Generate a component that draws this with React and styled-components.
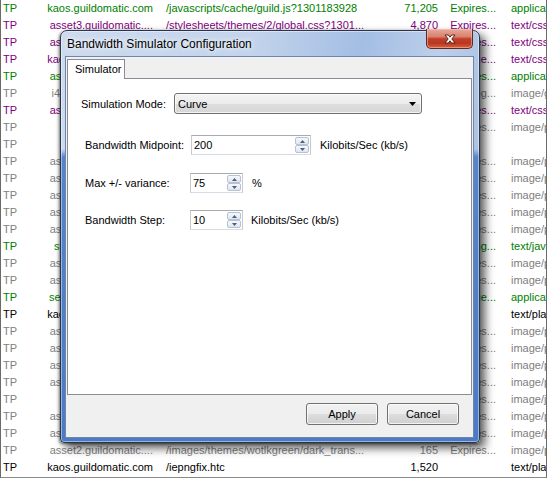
import React from 'react';
import styled, { createGlobalStyle } from 'styled-components';

const GlobalStyle = createGlobalStyle`
    html, body {
        margin: 0;
        padding: 0;
        background: #fff;
        font-family: "Liberation Sans", Arial, sans-serif;
    }
`;

const tones = {
    g: '#008000',
    p: '#800080',
    n: '#808080',
    k: '#000000',
};

const sessions = [
    ['g', 'kaos.guildomatic.com', '/javascripts/cache/guild.js?1301183928', '71,205', 'Expires...', 'application/x-javascript'],
    ['p', 'asset3.guildomatic....', '/stylesheets/themes/2/global.css?1301...', '4,870', 'Expires...', 'text/css'],
    ['p', 'asset1.guildomatic....', '/stylesheets/themes/2/forum.css?1301...', '2,114', 'Expires...', 'text/css'],
    ['p', 'kaos.guildomatic.com', '/stylesheets/cache/guild.css?1301183928', '9,806', 'max-age...', 'text/css'],
    ['g', 'asset2.guildomatic....', '/javascripts/lightbox.js?1301180144', '12,840', 'Expires...', 'application/x-javascript'],
    ['n', 'i42.photobucket.com', '/albums/ff241/banner_top.gif', '24,410', 'Caching...', 'image/gif'],
    ['p', 'asset1.guildomatic....', '/stylesheets/lightbox.css?1301180144', '1,632', 'Expires...', 'text/css'],
    ['n', 'www.google.com', '/images/nav_logo.png', '3,212', 'Expires...', 'image/png'],
    ['n', 'www.google.com', '/', '0', '', ''],
    ['n', 'asset2.guildomatic....', '/images/themes/wotlkgreen/header.png', '8,410', 'Expires...', 'image/png'],
    ['n', 'asset3.guildomatic....', '/images/themes/wotlkgreen/nav_bg.png', '1,028', 'Expires...', 'image/png'],
    ['n', 'asset1.guildomatic....', '/images/themes/wotlkgreen/tab_on.png', '644', 'Expires...', 'image/png'],
    ['n', 'asset2.guildomatic....', '/images/themes/wotlkgreen/tab_off.png', '612', 'Expires...', 'image/png'],
    ['n', 'asset3.guildomatic....', '/images/themes/wotlkgreen/box_top.png', '402', 'Expires...', 'image/png'],
    ['g', 'static.wowhead.com', '/widgets/power.js', '18,220', 'Caching...', 'text/javascript'],
    ['n', 'asset1.guildomatic....', '/images/themes/wotlkgreen/box_bot.png', '398', 'Expires...', 'image/png'],
    ['n', 'asset2.guildomatic....', '/images/themes/wotlkgreen/button.png', '1,104', 'Expires...', 'image/png'],
    ['g', 'secure.guildomatic....', '/javascripts/cache/base.js?1301183928', '5,300', 'max-age...', 'application/x-javascript'],
    ['k', 'kaos.guildomatic.com', '/crossdomain.xml', '212', '', 'text/plain'],
    ['n', 'asset3.guildomatic....', '/images/themes/wotlkgreen/bullet.png', '220', 'Expires...', 'image/png'],
    ['n', 'asset1.guildomatic....', '/images/themes/wotlkgreen/divider.png', '180', 'Expires...', 'image/png'],
    ['n', 'asset2.guildomatic....', '/images/themes/wotlkgreen/rss.png', '710', 'Expires...', 'image/png'],
    ['n', 'asset3.guildomatic....', '/images/themes/wotlkgreen/side_bg.png', '2,340', 'Expires...', 'image/png'],
    ['n', 'www.google.com', '/images/banner.jpg', '36,118', 'Expires...', 'image/jpeg'],
    ['n', 'asset1.guildomatic....', '/images/themes/wotlkgreen/footer.png', '3,904', 'Expires...', 'image/png'],
    ['n', 'asset2.guildomatic....', '/images/themes/wotlkgreen/corner.png', '266', 'Expires...', 'image/png'],
    ['n', 'asset2.guildomatic....', '/images/themes/wotlkgreen/dark_trans...', '165', 'Expires...', 'image/png'],
    ['k', 'kaos.guildomatic.com', '/iepngfix.htc', '1,520', '', 'text/plain'],
];

const CloseGlyph = () => (
    <svg width="12" height="10" viewBox="0 0 12 10">
        <path
            d="M1 1 L4.3 1 L6 3.2 L7.7 1 L11 1 L7.8 5 L11 9 L7.7 9 L6 6.8 L4.3 9 L1 9 L4.2 5 Z"
            fill="#fff"
            stroke="#4a1a14"
            strokeWidth="0.9"
            strokeLinejoin="round"
        />
    </svg>
);

const Arrow = ({ up, color = '#000', w = 7, h = 4 }) => (
    <svg width={w} height={h} viewBox={`0 0 ${w} ${h}`}>
        <path d={up ? `M0 ${h} L${w / 2} 0 L${w} ${h} Z` : `M0 0 L${w} 0 L${w / 2} ${h} Z`} fill={color} />
    </svg>
);

const Spinner = ({ value, width }) => (
    <NumberBox $width={width}>
        <span>{value}</span>
        <SpinButtons>
            <SpinButton><Arrow up color="#4c5f7c" w={5} h={3} /></SpinButton>
            <SpinButton><Arrow color="#4c5f7c" w={5} h={3} /></SpinButton>
        </SpinButtons>
    </NumberBox>
);

export default function App() {
    return (
        <Screen>
            <GlobalStyle />
            <SessionList>
                {sessions.map(([tone, host, url, size, caching, type], i) => (
                    <Row key={i} $tone={tone}>
                        <Proto>TP</Proto>
                        <Host>{host}</Host>
                        <Url>{url}</Url>
                        <Size>{size}</Size>
                        <Caching>{caching}</Caching>
                        <ContentType>{type}</ContentType>
                    </Row>
                ))}
            </SessionList>

            <Dialog>
                <TitleBar>Bandwidth Simulator Configuration</TitleBar>
                <CloseButton><CloseGlyph /></CloseButton>
                <Client>
                    <TabStrip>
                        <Tab>Simulator</Tab>
                    </TabStrip>
                    <TabPage>
                        <ModeRow>
                            <Label $width={93}>Simulation Mode:</Label>
                            <Combo>
                                <span>Curve</span>
                                <Arrow />
                            </Combo>
                        </ModeRow>
                        <FieldRow $top={21}>
                            <Label $width={106}>Bandwidth Midpoint:</Label>
                            <Spinner value="200" width={120} />
                            <Unit>Kilobits/Sec (kb/s)</Unit>
                        </FieldRow>
                        <FieldRow $top={18}>
                            <Label $width={105}>Max +/- variance:</Label>
                            <Spinner value="75" width={53} />
                            <Unit>%</Unit>
                        </FieldRow>
                        <FieldRow $top={17}>
                            <Label $width={105}>Bandwidth Step:</Label>
                            <Spinner value="10" width={53} />
                            <Unit $gap={8}>Kilobits/Sec (kb/s)</Unit>
                        </FieldRow>
                    </TabPage>
                    <Footer>
                        <Button>Apply</Button>
                        <Button>Cancel</Button>
                    </Footer>
                </Client>
            </Dialog>
        </Screen>
    );
}

const Screen = styled.div`
    position: relative;
    width: 548px;
    height: 479px;
    overflow: hidden;
    background: #fff;
`;

const SessionList = styled.div`
    width: 547px;
    height: 478px;
    box-sizing: border-box;
    border-left: 1px solid #6a6a6a;
    border-right: 1px solid #6a6a6a;
    border-bottom: 1px solid #8a8a8a;
    overflow: hidden;
    font-size: 11px;
`;

const Row = styled.div`
    display: grid;
    grid-template-columns: 39px 115px 235px 50px 57px 1fr;
    height: 17px;
    line-height: 17px;
    color: ${p => tones[p.$tone]};
    white-space: nowrap;

    & > div {
        overflow: hidden;
    }
`;

const Proto = styled.div`
    padding-left: 2px;
`;

const Host = styled.div`
    text-align: right;
    padding-right: 2px;
`;

const Url = styled.div`
    padding-left: 11px;
`;

const Size = styled.div`
    text-align: right;
    padding-right: 2px;
`;

const Caching = styled.div`
    text-align: right;
    padding-right: 1px;
`;

const ContentType = styled.div`
    padding-left: 14px;
`;

const Dialog = styled.div`
    position: absolute;
    left: 60px;
    top: 30px;
    width: 420px;
    height: 413px;
    box-sizing: border-box;
    display: flex;
    flex-direction: column;
    padding: 0 5px 4px 4px;
    border: 1px solid #27364d;
    border-radius: 7px 7px 4px 4px;
    background:
        linear-gradient(to bottom, rgba(0, 0, 0, 0) 0, rgba(0, 0, 0, 0) 118px, #5585cb 126px, #4a7bc4 100%),
        linear-gradient(100deg, #cddaee 0%, #c2d3eb 40%, #a3bee4 62%, #bdcfea 78%, #9ab6de 100%);
    box-shadow:
        inset 0 0 0 1px rgba(255, 255, 255, 0.45),
        5px 5px 10px rgba(0, 0, 0, 0.65),
        -1px 1px 3px rgba(0, 0, 0, 0.5);
`;

const TitleBar = styled.div`
    height: 25px;
    display: flex;
    align-items: center;
    padding-left: 2px;
    font-size: 12px;
    color: #000;
    text-shadow: 0 0 8px #fff, 0 0 4px rgba(255, 255, 255, 0.9);
`;

const CloseButton = styled.div`
    position: absolute;
    left: 365px;
    top: -2px;
    width: 47px;
    height: 20px;
    box-sizing: border-box;
    display: flex;
    align-items: center;
    justify-content: center;
    border: 1px solid #5e2a24;
    border-top: none;
    border-radius: 0 0 5px 5px;
    background: linear-gradient(to bottom, #e9a99a 0%, #d8826d 40%, #c23d2a 52%, #b9371f 75%, #d8613c 100%);
    box-shadow: inset 0 0 0 1px rgba(255, 200, 190, 0.5);
`;

const Client = styled.div`
    flex: 1;
    display: flex;
    flex-direction: column;
    border: 1px solid #6f86a8;
    background: #f0f0f0;
`;

const TabStrip = styled.div`
    display: flex;
    margin: 2px 1px 0;
    height: 19px;
`;

const Tab = styled.div`
    width: 58px;
    box-sizing: border-box;
    height: 20px;
    padding-left: 7px;
    line-height: 19px;
    font-size: 11px;
    background: #fff;
    border: 1px solid #898c95;
    border-bottom: none;
    position: relative;
    z-index: 1;
`;

const TabPage = styled.div`
    height: 317px;
    box-sizing: border-box;
    margin: 0 1px;
    padding: 14px 0 0 13px;
    background: #fff;
    border: 1px solid #898c95;
    font-size: 11px;
`;

const ModeRow = styled.div`
    display: flex;
    align-items: center;
`;

const FieldRow = styled.div`
    display: flex;
    align-items: center;
    margin-top: ${p => p.$top}px;
    padding-left: 4px;
`;

const Label = styled.div`
    width: ${p => p.$width}px;
    flex: none;
`;

const Combo = styled.div`
    width: 248px;
    height: 21px;
    box-sizing: border-box;
    display: flex;
    align-items: center;
    justify-content: space-between;
    padding: 0 5px 0 3px;
    border: 1px solid #707070;
    border-radius: 3px;
    background: linear-gradient(to bottom, #f4f4f4 0%, #ececec 50%, #dedede 52%, #d6d6d6 100%);
    box-shadow: inset 0 0 0 1px rgba(255, 255, 255, 0.7);
`;

const NumberBox = styled.div`
    width: ${p => p.$width}px;
    height: 20px;
    box-sizing: border-box;
    display: flex;
    align-items: center;
    justify-content: space-between;
    padding: 0 1px 0 2px;
    border: 1px solid #a9abb2;
    border-left-color: #c8cad0;
    border-right-color: #c8cad0;
    border-bottom-color: #d6dce4;
    background: #fff;
`;

const SpinButtons = styled.div`
    display: flex;
    flex-direction: column;
    height: 16px;
    width: 14px;
`;

const SpinButton = styled.div`
    flex: 1;
    display: flex;
    align-items: center;
    justify-content: center;
    box-sizing: border-box;
    border: 1px solid #b6c1d3;
    border-radius: 2px;
    background: linear-gradient(to bottom, #f6f8fc, #dfe6f0);
`;

const Unit = styled.div`
    margin-left: ${p => p.$gap || 9}px;
`;

const Footer = styled.div`
    flex: 1;
    display: flex;
    justify-content: flex-end;
    align-items: flex-start;
    gap: 9px;
    padding: 8px 14px 0 0;
`;

const Button = styled.div`
    width: 72px;
    height: 22px;
    box-sizing: border-box;
    display: flex;
    align-items: center;
    justify-content: center;
    font-size: 11px;
    border: 1px solid #707070;
    border-radius: 3px;
    background: linear-gradient(to bottom, #f2f2f2 0%, #ebebeb 50%, #dddddd 52%, #cfcfcf 100%);
    box-shadow: inset 0 0 0 1px rgba(255, 255, 255, 0.75);
`;
